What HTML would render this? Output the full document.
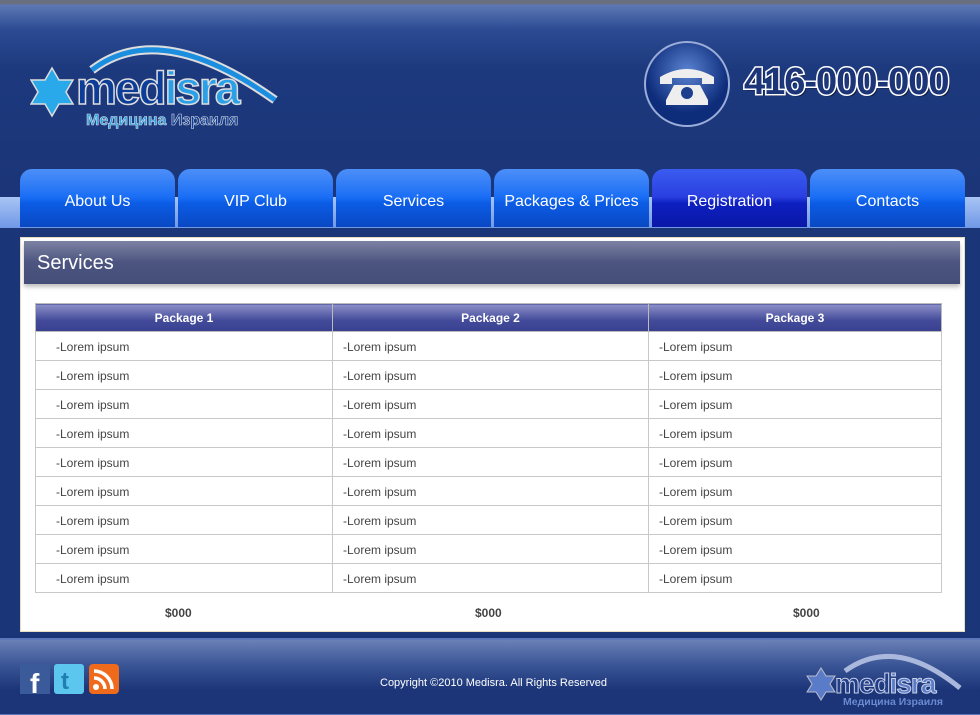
<!DOCTYPE html>
<html><head><meta charset="utf-8"><style>
*{margin:0;padding:0;box-sizing:border-box}
body{width:980px;height:715px;overflow:hidden;background:#1a3578;font-family:"Liberation Sans",sans-serif;position:relative}
.hdr{position:absolute;left:0;top:0;width:980px;height:228px;background:linear-gradient(#6a6f80 0,#6a6f80 4px,#5d78b4 5px,#2b4a92 30px,#1d397d 70px,#1b3578 190px)}
.strip{position:absolute;left:0;top:197px;width:980px;height:31px;background:linear-gradient(#a8c4f4,#6f98e6)}
.tab{position:absolute;top:169px;width:155px;height:58px;border-radius:12px 12px 0 0;background:linear-gradient(#4d8ff8 0,#1a6ef5 28px,#0b5ce6 34px,#0a48c2 58px);color:#fff;font-size:16px;text-align:center;line-height:66px}
.tab.act{background:linear-gradient(#3b5cf0 0,#2a3fe0 28px,#0d1fc0 34px,#0a18a8 58px)}
.panel{position:absolute;left:20px;top:237px;width:945px;height:395px;background:#fff;border:1px solid #e8dcc0}
.title{position:absolute;left:24px;top:241px;width:936px;height:43px;background:linear-gradient(#7c82a2,#4c5580 50%,#444e78);color:#fff;font-size:20px;line-height:44px;padding-left:13px;box-shadow:0 3px 4px rgba(0,0,0,.25)}
table{position:absolute;left:35px;top:303px;width:907px;border-collapse:collapse;font-size:12px;color:#444}
th{height:28px;background:linear-gradient(#8c90c8,#424a9a 60%,#3a4090);color:#fff;font-size:12px;border:1px solid #bbb}
td{height:29px;border:1px solid #c8c8c8;padding-left:10px;padding-top:2px}
td:first-child{padding-left:20px}
.price{position:absolute;top:606px;font-size:12px;font-weight:bold;color:#444}
.ftr{position:absolute;left:0;top:638px;width:980px;height:77px;border-top:2px solid #5b79b8;background:linear-gradient(#6a80b6 0,#3a5596 25px,#1b3578 50px);border-bottom:1px solid #5b79b8}
</style></head><body>
<div class="hdr"></div>
<div class="strip"></div>
<svg style="position:absolute;left:30px;top:28px" width="255" height="102">
<path d="M62 42 Q130 -10 245 72" stroke="#ddd" stroke-width="9" fill="none"/>
<path d="M62 42 Q130 -10 245 72" stroke="#1c8ee0" stroke-width="5" fill="none"/>
<polygon points="22,40 29,52 43,52 36,64 43,76 29,76 22,88 15,76 1,76 8,64 1,52 15,52" fill="#29a8ea" stroke="#ddd" stroke-width="1.5"/>
<text x="46" y="76" font-family="Liberation Sans" font-weight="bold" font-size="46" fill="#0c3d99" stroke="#ddd" stroke-width="1.5" letter-spacing="-2">med<tspan fill="#2aa0e8">isra</tspan></text>
<text x="56" y="97" font-family="Liberation Sans" font-weight="bold" font-size="16" fill="#2aa0e8" stroke="#ddd" stroke-width=".6">Медицина <tspan fill="#0c3d99">Израиля</tspan></text>
</svg>
<svg style="position:absolute;left:644px;top:41px" width="88" height="88">
<defs><radialGradient id="g" cx="50%" cy="35%"><stop offset="0" stop-color="#5b84d2"/><stop offset="1" stop-color="#0d2c7a"/></radialGradient></defs>
<circle cx="43" cy="43" r="42" fill="url(#g)" stroke="#9aacd8" stroke-width="2"/>
<path d="M16 36 Q43 20 70 36 L70 43 L58 43 L58 37 L28 37 L28 43 L16 43Z M22 59 L30 44 L56 44 L64 59 L64 64 L22 64Z" fill="#eee"/>
<circle cx="43" cy="52" r="6" fill="#1d3e8c"/>
</svg>
<svg style="position:absolute;left:740px;top:55px" width="220" height="50">
<text x="6" y="41" font-family="Liberation Sans" font-weight="bold" font-size="38" fill="#000" opacity=".5" letter-spacing="-1">416-000-000</text>
<text x="4" y="39" font-family="Liberation Sans" font-weight="bold" font-size="38" fill="#1b3578" stroke="#fff" stroke-width="3" paint-order="stroke" letter-spacing="-1">416-000-000</text>
</svg>
<div class="tab" style="left:20px">About Us</div>
<div class="tab" style="left:178px">VIP Club</div>
<div class="tab" style="left:336px">Services</div>
<div class="tab" style="left:494px">Packages &amp; Prices</div>
<div class="tab act" style="left:652px">Registration</div>
<div class="tab" style="left:810px">Contacts</div>
<div class="panel"></div>
<div class="title">Services</div>
<table>
<tr><th style="width:297px">Package 1</th><th style="width:316px">Package 2</th><th>Package 3</th></tr>
<tr><td>-Lorem ipsum</td><td>-Lorem ipsum</td><td>-Lorem ipsum</td></tr>
<tr><td>-Lorem ipsum</td><td>-Lorem ipsum</td><td>-Lorem ipsum</td></tr>
<tr><td>-Lorem ipsum</td><td>-Lorem ipsum</td><td>-Lorem ipsum</td></tr>
<tr><td>-Lorem ipsum</td><td>-Lorem ipsum</td><td>-Lorem ipsum</td></tr>
<tr><td>-Lorem ipsum</td><td>-Lorem ipsum</td><td>-Lorem ipsum</td></tr>
<tr><td>-Lorem ipsum</td><td>-Lorem ipsum</td><td>-Lorem ipsum</td></tr>
<tr><td>-Lorem ipsum</td><td>-Lorem ipsum</td><td>-Lorem ipsum</td></tr>
<tr><td>-Lorem ipsum</td><td>-Lorem ipsum</td><td>-Lorem ipsum</td></tr>
<tr><td>-Lorem ipsum</td><td>-Lorem ipsum</td><td>-Lorem ipsum</td></tr>
</table>
<div class="price" style="left:165px">$000</div>
<div class="price" style="left:475px">$000</div>
<div class="price" style="left:793px">$000</div>
<div class="ftr"></div>
<svg style="position:absolute;left:20px;top:663px" width="102" height="32">
<rect x="0" y="1" width="30" height="30" fill="#3b5a9a"/><text x="10" y="30" font-size="28" font-weight="bold" fill="#fff" font-family="Liberation Sans">f</text>
<rect x="34" y="1" width="30" height="30" rx="3" fill="#5cc6ee"/><text x="41" y="26" font-size="24" font-weight="bold" fill="#1d7fb0" font-family="Liberation Sans">t</text>
<rect x="69" y="1" width="30" height="30" rx="4" fill="#f06a1c"/>
<circle cx="76" cy="24" r="3" fill="#fff"/><path d="M74 15 A11 11 0 0 1 85 26 M74 8 A18 18 0 0 1 92 26" stroke="#fff" stroke-width="3.5" fill="none"/>
</svg>
<div style="position:absolute;left:380px;top:677px;font-size:11px;color:#fff">Copyright ©2010 Medisra. All Rights Reserved</div>
<svg style="position:absolute;left:805px;top:643px" width="160" height="65">
<path d="M40 28 Q90 -8 155 45" stroke="#aab8dd" stroke-width="5" fill="none"/>
<polygon points="16,25 21,33 30,33 25,41 30,49 21,49 16,57 11,49 2,49 7,41 2,33 11,33" fill="#5a7cc8" stroke="#bbc" stroke-width="1"/>
<text x="30" y="50" font-family="Liberation Sans" font-weight="bold" font-size="28" fill="#233f8a" stroke="#c8d0e8" stroke-width="1" letter-spacing="-1">med<tspan fill="#5a7cc8">isra</tspan></text>
<text x="38" y="62" font-family="Liberation Sans" font-weight="bold" font-size="10.5" fill="#6b8ad0">Медицина Израиля</text>
</svg>
</body></html>
